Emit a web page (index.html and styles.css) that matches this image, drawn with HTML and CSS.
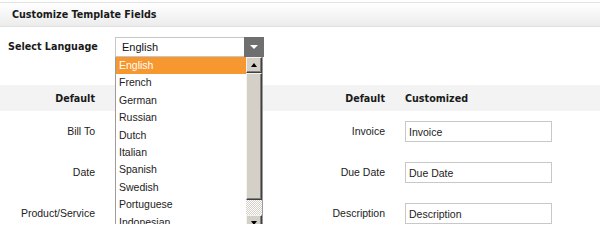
FILE: index.html
```html
<!DOCTYPE html>
<html>
<head>
<meta charset="utf-8">
<link rel="stylesheet" href="styles.css">
</head>
<body>
<div class="panel">
  <div class="panel-head">Customize Template Fields</div>
  <div class="lang-row">
    <span class="lang-label">Select Language</span>
    <div class="select-wrap">
      <div class="select">
        <span class="select-value">English</span>
        <span class="select-btn"><span class="tri-down-white"></span></span>
      </div>
      <div class="dropdown">
        <ul class="options">
          <li class="opt active">English</li>
          <li class="opt">French</li>
          <li class="opt">German</li>
          <li class="opt">Russian</li>
          <li class="opt">Dutch</li>
          <li class="opt">Italian</li>
          <li class="opt">Spanish</li>
          <li class="opt">Swedish</li>
          <li class="opt">Portuguese</li>
          <li class="opt">Indonesian</li>
        </ul>
        <div class="scrollbar">
          <div class="sb-btn"><span class="tri-up"></span></div>
          <div class="sb-thumb"></div>
          <div class="sb-track"></div>
          <div class="sb-btn"><span class="tri-down"></span></div>
        </div>
      </div>
    </div>
  </div>
  <div class="fields">
    <div class="fields-head">
      <span class="lbl">Default</span>
      <span></span>
      <span class="lbl">Default</span>
      <span>Customized</span>
    </div>
    <div class="rows">
      <div class="field-row">
        <span class="lbl">Bill To</span>
        <input class="inp" type="text">
        <span class="lbl">Invoice</span>
        <input class="inp" type="text" value="Invoice">
      </div>
      <div class="field-row">
        <span class="lbl">Date</span>
        <input class="inp" type="text">
        <span class="lbl">Due Date</span>
        <input class="inp" type="text" value="Due Date">
      </div>
      <div class="field-row">
        <span class="lbl">Product/Service</span>
        <input class="inp" type="text">
        <span class="lbl">Description</span>
        <input class="inp" type="text" value="Description">
      </div>
    </div>
  </div>
</div>
</body>
</html>
```
FILE: styles.css
```css
* { box-sizing: border-box; }
html, body { margin: 0; padding: 0; background: #fff; }
body {
  font-family: "Liberation Sans", Arial, sans-serif;
  font-size: 10.5px;
  color: #222;
}
.panel { width: 600px; }
.panel-head {
  margin-top: 2px;
  height: 25px;
  border-top: 1px solid #e4e4e4;
  border-bottom: 1px solid #e0e0e0;
  background: linear-gradient(#ffffff, #ececec);
  padding-left: 12px;
  font-family: "DejaVu Sans", Verdana, sans-serif;
  font-weight: bold;
  font-size: 9.6px;
  line-height: 23px;
  color: #1a1a1a;
}
.lang-row {
  display: flex;
  align-items: center;
  padding: 10px 0 0 8px;
}
.lang-label {
  flex: none;
  width: 107px;
  font-family: "DejaVu Sans", Verdana, sans-serif;
  font-weight: bold;
  font-size: 9.6px;
  color: #1a1a1a;
  position: relative;
  top: -1px;
}
.select-wrap {
  position: relative;
  width: 149px;
}
.select {
  display: flex;
  height: 20px;
  border: 1px solid #c6c6c6;
  background: #fff;
}
.select-value {
  flex: 1;
  padding-left: 6px;
  line-height: 18px;
  font-size: 11px;
  color: #111;
}
.select-btn {
  flex: none;
  width: 20px;
  margin: -1px -1px -1px 0;
  background: #6f6f6f;
  display: flex;
  align-items: center;
  justify-content: center;
}
.tri-down-white {
  width: 0; height: 0;
  border-left: 4px solid transparent;
  border-right: 4px solid transparent;
  border-top: 4px solid #fff;
}
.dropdown {
  position: absolute;
  left: 0;
  top: 100%;
  width: 148px;
  display: flex;
  border: 1px solid #9c9c9c;
  border-top: none;
  background: #fff;
  z-index: 5;
}
.options {
  flex: 1;
  list-style: none;
  margin: 0;
  padding: 0;
}
.opt {
  height: 17.4px;
  line-height: 17.4px;
  padding-left: 3px;
  font-size: 10.5px;
  color: #222;
}
.opt.active {
  background: #f7972f;
  color: #fff;
}
.scrollbar {
  flex: none;
  width: 16px;
  display: flex;
  flex-direction: column;
}
.sb-btn, .sb-thumb {
  background: #d4d0c8;
  border: 1px solid;
  border-color: #f4f3ef #404040 #404040 #f4f3ef;
  box-shadow: inset -1px -1px 0 #808080;
}
.sb-btn {
  height: 16px;
  display: flex;
  align-items: center;
  justify-content: center;
}
.sb-thumb { height: 127px; }
.sb-track {
  flex: 1;
  background-color: #f2f1ee;
  background-image: repeating-conic-gradient(#d4d0c8 0 25%, #ffffff 0 50%);
  background-size: 2px 2px;
}
.tri-up {
  width: 0; height: 0;
  border-left: 3.5px solid transparent;
  border-right: 3.5px solid transparent;
  border-bottom: 4px solid #000;
}
.tri-down {
  width: 0; height: 0;
  border-left: 3.5px solid transparent;
  border-right: 3.5px solid transparent;
  border-top: 4px solid #000;
}
.fields { margin-top: 28px; }
.fields-head, .field-row {
  display: grid;
  grid-template-columns: 95px 147px 103px 147px;
  column-gap: 20px;
  align-items: center;
}
.fields-head {
  height: 26px;
  background: #f3f3f3;
  font-family: "DejaVu Sans", Verdana, sans-serif;
  font-weight: bold;
  font-size: 9.6px;
  color: #1a1a1a;
}
.lbl { text-align: right; }
.rows {
  display: flex;
  flex-direction: column;
  gap: 20px;
  padding-top: 10px;
}
.field-row .lbl { position: relative; top: -1px; }
.inp {
  width: 147px;
  height: 21px;
  margin: 0;
  border: 1px solid #c8c8c8;
  padding: 0 3px;
  font-family: "Liberation Sans", Arial, sans-serif;
  font-size: 10.5px;
  color: #222;
  background: #fff;
  outline: none;
}
```
